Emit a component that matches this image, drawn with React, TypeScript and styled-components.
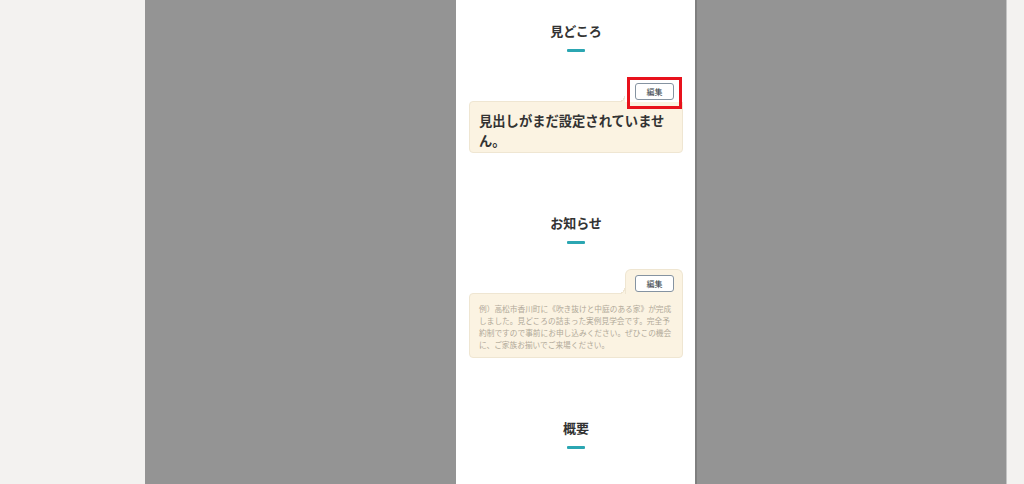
import styled, { createGlobalStyle } from "styled-components";

const GlobalStyle = createGlobalStyle`
  html, body {
    margin: 0;
    padding: 0;
    background: #f3f2f0;
    font-family: "Noto Sans CJK JP", "Noto Sans", sans-serif;
  }
`;

const notice =
  "例）高松市香川町に《吹き抜けと中庭のある家》が完成しました。見どころの詰まった実例見学会です。完全予約制ですので事前にお申し込みください。ぜひこの機会に、ご家族お揃いでご来場ください。";

const App = () => {
  return (
    <>
      <GlobalStyle />
      <Page>
        <Side />
        <Stage>
          <Preview>
            <Section>
              <Heading>見どころ</Heading>
              <Bar />
              <CardBlock>
                <Tab $selected>
                  <EditButton>編集</EditButton>
                  <Selection />
                </Tab>
                <Card $pb={2}>
                  <CardTitle>見出しがまだ設定されていません。</CardTitle>
                </Card>
              </CardBlock>
            </Section>

            <Section>
              <Heading>お知らせ</Heading>
              <Bar />
              <CardBlock>
                <Tab>
                  <EditButton>編集</EditButton>
                </Tab>
                <Card $pb={6}>
                  <Placeholder>{notice}</Placeholder>
                </Card>
              </CardBlock>
            </Section>

            <Section>
              <Heading>概要</Heading>
              <Bar />
            </Section>
          </Preview>
        </Stage>
        <Side $grow />
      </Page>
    </>
  );
};

const Page = styled.div`
  display: flex;
  height: 484px;
  overflow: hidden;
`;

const Side = styled.div<{ $grow?: boolean }>`
  width: 145px;
  flex: ${(p) => (p.$grow ? "1" : "none")};
  background: #f3f2f0;
`;

const Stage = styled.div`
  width: 862px;
  padding-left: 311px;
  box-sizing: border-box;
  background: #949494;
  border-right: 1px solid #c4c4c4;
  display: flex;
`;

const Preview = styled.div`
  width: 241px;
  height: 100%;
  box-sizing: border-box;
  background: #fff;
  border-right: 2px solid #7f7f7f;
  padding: 21px 12px 0 13px;
`;

const Section = styled.section`
  display: flex;
  flex-direction: column;
  align-items: center;
  margin-bottom: 60px;
`;

const Heading = styled.h2`
  margin: 0;
  font-size: 13px;
  line-height: 20px;
  font-weight: 700;
  color: #333;
`;

const Bar = styled.span`
  display: block;
  width: 18px;
  height: 3px;
  margin-top: 8px;
  background: #2ba6b2;
  border-radius: 1px;
`;

const CardBlock = styled.div`
  align-self: stretch;
  display: flex;
  flex-direction: column;
  align-items: flex-end;
  margin-top: 25px;
`;

const Tab = styled.div<{ $selected?: boolean }>`
  position: relative;
  z-index: 1;
  padding: 5px 8px 2px 9px;
  margin-bottom: -1px;
  background: ${(p) => (p.$selected ? "#fff" : "#fbf3e2")};
  border: 1px solid ${(p) => (p.$selected ? "#fff" : "#efe6d2")};
  border-bottom: none;
  border-radius: 6px 6px 0 0;

  &::after {
    content: "";
    position: absolute;
    left: -7px;
    bottom: 0;
    width: 6px;
    height: 6px;
    background: radial-gradient(
      circle at 0 0,
      transparent 5px,
      #efe6d2 5px,
      #efe6d2 6px,
      #fbf3e2 6.5px
    );
  }
`;

const Selection = styled.span`
  position: absolute;
  left: 1px;
  right: 0;
  top: -1px;
  bottom: -7px;
  border: 3px solid #e8121c;
  pointer-events: none;
`;

const EditButton = styled.button`
  display: block;
  width: 39px;
  height: 17px;
  padding: 0;
  background: #fff;
  border: 1px solid #8593a1;
  border-radius: 3px;
  font-family: inherit;
  font-size: 8px;
  line-height: 15px;
  color: #2f3942;
  cursor: pointer;
`;

const Card = styled.div<{ $pb: number }>`
  align-self: stretch;
  background: #fbf3e2;
  border: 1px solid #efe6d2;
  border-radius: 4px 0 4px 4px;
  padding: 9px 9px ${(p) => p.$pb}px;
`;

const CardTitle = styled.p`
  margin: 0;
  font-size: 13.3px;
  line-height: 19.5px;
  font-weight: 700;
  color: #333;
`;

const Placeholder = styled.p`
  margin: 0;
  font-size: 7.7px;
  line-height: 12px;
  color: #b1a999;
`;

export default App;
